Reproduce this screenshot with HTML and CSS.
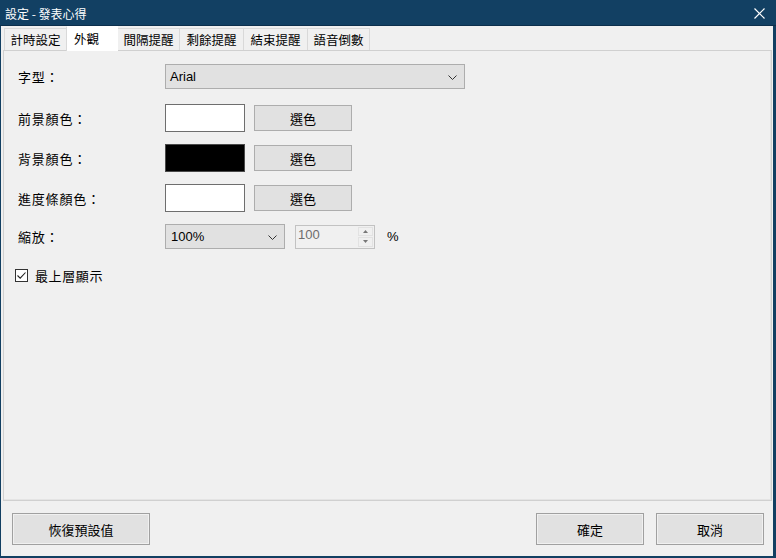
FILE: index.html
```html
<!DOCTYPE html>
<html lang="zh-Hant">

<head>
    <meta charset="UTF-8">
    <meta name="viewport" content="width=device-width, initial-scale=1.0">
    <title>設定 - 發表心得</title>
    <link rel="stylesheet" href="styles.css">
</head>

<body>
    <div class="window">
        <div class="titleBar">
            <span class="title">設定 - 發表心得</span>
            <svg class="close" width="11" height="11" viewBox="0 0 11 11">
                <path d="M0.5 0.5 L10.5 10.5 M10.5 0.5 L0.5 10.5" stroke="#fff" stroke-width="1.2" fill="none" />
            </svg>
        </div>

        <div class="tabs">
            <div class="tab">計時設定</div>
            <div class="tab active">外觀</div>
            <div class="tab">間隔提醒</div>
            <div class="tab wide">剩餘提醒</div>
            <div class="tab wide">結束提醒</div>
            <div class="tab">語音倒數</div>
        </div>

        <div class="panel">
            <div class="row rowFont">
                <span class="label">字型：</span>
                <div class="select selectWide">
                    <span>Arial</span>
                    <svg class="chevron" width="9" height="5" viewBox="0 0 9 5">
                        <path d="M0.5 0.5 L4.5 4.5 L8.5 0.5" stroke="#333" fill="none" />
                    </svg>
                </div>
            </div>

            <div class="row">
                <span class="label">前景顏色：</span>
                <div class="swatch white"></div>
                <button class="btn pick">選色</button>
            </div>

            <div class="row">
                <span class="label">背景顏色：</span>
                <div class="swatch black"></div>
                <button class="btn pick">選色</button>
            </div>

            <div class="row">
                <span class="label">進度條顏色：</span>
                <div class="swatch white"></div>
                <button class="btn pick">選色</button>
            </div>

            <div class="row rowZoom">
                <span class="label">縮放：</span>
                <div class="select selectSmall">
                    <span>100%</span>
                    <svg class="chevron" width="9" height="5" viewBox="0 0 9 5">
                        <path d="M0.5 0.5 L4.5 4.5 L8.5 0.5" stroke="#333" fill="none" />
                    </svg>
                </div>
                <div class="spin">
                    <span class="spinValue">100</span>
                    <div class="spinBtns">
                        <div class="spinBtn">
                            <svg width="5" height="3" viewBox="0 0 5 3"><path d="M0 3 L2.5 0 L5 3 Z" fill="#777" /></svg>
                        </div>
                        <div class="spinBtn">
                            <svg width="5" height="3" viewBox="0 0 5 3"><path d="M0 0 L2.5 3 L5 0 Z" fill="#777" /></svg>
                        </div>
                    </div>
                </div>
                <span class="percent">%</span>
            </div>

            <label class="check">
                <span class="box">
                    <svg width="11" height="11" viewBox="0 0 11 11">
                        <path d="M1.5 5.5 L4.2 8.2 L9.5 2.5" stroke="#222" stroke-width="1.1" fill="none" />
                    </svg>
                </span>
                最上層顯示
            </label>
        </div>

        <div class="footer">
            <button class="btn big">恢復預設值</button>
            <div class="footerRight">
                <button class="btn big small">確定</button>
                <button class="btn big small">取消</button>
            </div>
        </div>
    </div>
</body>

</html>
```

FILE: styles.css
```css
/* Base styles */
body {
    margin: 0;
    font-family: "Liberation Sans", "Noto Sans CJK TC", sans-serif;
    font-size: 13px;
    color: #000;
}

.window {
    width: 776px;
    height: 558px;
    box-sizing: border-box;
    display: flex;
    flex-direction: column;
    background-color: #f0f0f0;
    border: 0 solid #123f62;
    border-width: 0 3px 2px 1px;
}

.titleBar {
    height: 25px;
    margin: 0 -3px 0 -1px;
    padding: 0 11px 0 5px;
    display: flex;
    align-items: center;
    justify-content: space-between;
    background-color: #124063;
    border-bottom: 1px solid #0c2f4c;
    color: #fff;
    font-size: 12px;
}

.title {
    font-family: "Noto Sans CJK TC", sans-serif;
    padding-top: 1px;
}

.close {
    margin-top: 1px;
}

/* Tab strip */
.tabs {
    display: flex;
    align-items: flex-end;
    height: 24px;
    padding-left: 2px;
}

.tab {
    width: 63px;
    height: 22px;
    box-sizing: border-box;
    display: flex;
    align-items: center;
    justify-content: center;
    border: 1px solid #d9d9d9;
    border-bottom: none;
    margin-left: -1px;
    background-color: #f0f0f0;
    font-family: "Noto Sans CJK TC", sans-serif;
    font-size: 12.5px;
}

.tab:first-child {
    margin-left: 1px;
}

.tab.wide {
    width: 65px;
}

.tab.active {
    position: relative;
    z-index: 1;
    width: 52px;
    height: 25px;
    margin-bottom: -1px;
    padding: 0 0 2px 7px;
    justify-content: flex-start;
    background-color: #fff;
    border-color: #fff;
    border-left-color: #d9d9d9;
}

/* Page panel */
.panel {
    flex: 1;
    margin: 0 1px 0 2px;
    padding: 13px 14px 0;
    display: flex;
    flex-direction: column;
    border: 1px solid #d0d0d0;
    box-shadow: inset -1px -1px 0 #e4e4e4;
}

.row {
    display: flex;
    align-items: center;
    height: 28px;
    margin-top: 12px;
}

.rowFont {
    height: 25px;
    margin-top: 0;
    margin-bottom: 3px;
}

.rowZoom {
    height: 25px;
}

.label {
    width: 147px;
    font-family: "Noto Sans CJK TC", sans-serif;
    font-size: 13px;
    letter-spacing: 0.8px;
}

.select {
    height: 25px;
    box-sizing: border-box;
    display: flex;
    align-items: center;
    justify-content: space-between;
    padding: 0 7px 0 4px;
    background-color: #e1e1e1;
    border: 1px solid #adadad;
}

.selectWide {
    width: 300px;
}

.selectSmall {
    width: 120px;
    padding-left: 5px;
}

.chevron {
    margin-top: 1px;
}

.swatch {
    width: 80px;
    height: 28px;
    box-sizing: border-box;
    border: 1px solid #6e6e6e;
}

.white {
    background-color: #fff;
}

.black {
    background-color: #000;
    border-color: #4a4a4a;
}

.btn {
    box-sizing: border-box;
    background-color: #e1e1e1;
    border: 1px solid #adadad;
    font-family: "Noto Sans CJK TC", sans-serif;
    font-size: 13px;
    color: #000;
    padding: 0;
}

.pick {
    width: 98px;
    height: 26px;
    margin-left: 9px;
}

.spin {
    width: 80px;
    height: 24px;
    box-sizing: border-box;
    margin-left: 10px;
    display: flex;
    align-items: center;
    justify-content: space-between;
    padding: 0 1px 0 2px;
    border: 1px solid #c2c2c2;
    background-color: #f0f0f0;
}

.spinValue {
    color: #6d6d6d;
    margin-top: -4px;
}

.spinBtns {
    width: 15px;
    height: 20px;
    display: flex;
    flex-direction: column;
    gap: 1px;
}

.spinBtn {
    flex: 1;
    display: flex;
    align-items: center;
    justify-content: center;
    border: 1px solid #e2e2e2;
    background-color: #f0f0f0;
}

.percent {
    margin-left: 12px;
}

.check {
    display: flex;
    align-items: center;
    gap: 7px;
    margin-top: 17px;
    margin-left: -3px;
    font-family: "Noto Sans CJK TC", sans-serif;
    font-size: 13px;
    letter-spacing: 0.6px;
}

.box {
    width: 13px;
    height: 13px;
    box-sizing: border-box;
    border: 1px solid #333;
    background-color: #fff;
    display: flex;
    align-items: center;
    justify-content: center;
}

/* Bottom buttons */
.footer {
    height: 55px;
    display: flex;
    justify-content: space-between;
    padding: 12px 9px 0 11px;
    box-sizing: border-box;
}

.footerRight {
    display: flex;
    gap: 12px;
}

.big {
    width: 138px;
    height: 32px;
    border-width: 1px;
    box-shadow: inset 0 0 0 1px #f0f0f0;
    border-color: #a0a0a0;
}

.small {
    width: 108px;
}
```
